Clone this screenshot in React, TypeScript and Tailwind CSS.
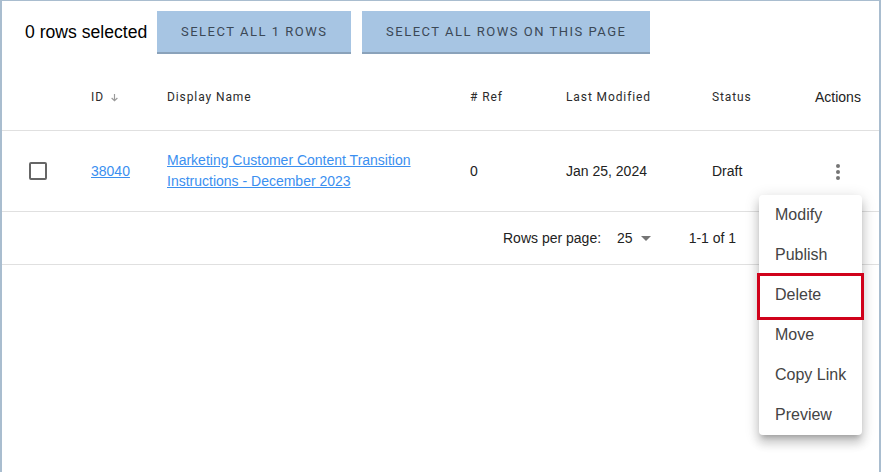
import React from "react";

const sans = { fontFamily: '"Liberation Sans", Arial, sans-serif' };

function Kebab() {
  return (
    <svg width="6" height="18" viewBox="0 0 6 18">
      <circle cx="3" cy="3" r="2" fill="#757575" />
      <circle cx="3" cy="9" r="2" fill="#757575" />
      <circle cx="3" cy="15" r="2" fill="#757575" />
    </svg>
  );
}

export default function App() {
  const items = ["Modify", "Publish", "Delete", "Move", "Copy Link", "Preview"];
  return (
    <div className="relative w-[881px] h-[472px] bg-white overflow-hidden" style={sans}>
      <div className="h-full border-l-2 border-t border-r-2 border-[#a9bdcf] flex flex-col">
        {/* toolbar */}
        <div className="h-[63px] flex items-start pt-[10px] pl-[23px]">
          <div className="h-[42px] flex items-center text-[17.6px] text-black mr-[10px]">0 rows selected</div>
          <button className="h-[43px] w-[194px] bg-[#a7c5e3] border-b-2 border-[#8aa2ba] text-[13px] tracking-[1.5px] text-[#3b4856] flex items-center justify-center" style={{ fontFamily: "Roboto, sans-serif" }}>
            SELECT ALL 1 ROWS
          </button>
          <button className="ml-[11px] h-[43px] w-[288px] bg-[#a7c5e3] border-b-2 border-[#8aa2ba] text-[13px] tracking-[1.5px] text-[#3b4856] flex items-center justify-center" style={{ fontFamily: "Roboto, sans-serif" }}>
            SELECT ALL ROWS ON THIS PAGE
          </button>
        </div>
        {/* header */}
        <div className="h-[67px] flex items-center border-b border-[#e0e0e0] text-[12px] tracking-[0.9px] text-[#2b2b2b]" style={{ fontFamily: "Roboto, sans-serif" }}>
          <div className="w-[89px]" />
          <div className="w-[76px] flex items-center gap-[6px]">
            <span>ID</span>
            <svg width="9" height="9" viewBox="0 0 10 10">
              <path d="M5 1 V8.5 M1.8 5.5 L5 8.5 L8.2 5.5" stroke="#9a9a9a" strokeWidth="1.3" fill="none" />
            </svg>
          </div>
          <div className="w-[303px]">Display Name</div>
          <div className="w-[96px]">{"# Ref"}</div>
          <div className="w-[146px]">Last Modified</div>
          <div className="w-[103px]">Status</div>
          <div className="text-[14px] tracking-normal text-[#222]" style={sans}>Actions</div>
        </div>
        {/* data row */}
        <div className="h-[81px] flex items-center border-b border-[#e0e0e0] text-[14px] text-[#222]">
          <div className="w-[89px] pl-[27px]">
            <div className="w-[18px] h-[18px] border-2 border-[#666] rounded-[2px]" />
          </div>
          <div className="w-[76px]">
            <a className="text-[#3b8ff0] underline">38040</a>
          </div>
          <div className="w-[303px] leading-[21px]">
            <a className="text-[#3b8ff0] underline">
              Marketing Customer Content Transition
              <br />
              Instructions - December 2023
            </a>
          </div>
          <div className="w-[96px]">0</div>
          <div className="w-[146px]">Jan 25, 2024</div>
          <div className="w-[123px]">Draft</div>
          <div className="pt-[1px]">
            <Kebab />
          </div>
        </div>
        {/* footer */}
        <div className="h-[53px] flex items-center border-b border-[#e0e0e0] text-[14px] text-[#222] pl-[501px]">
          <span>Rows per page:</span>
          <span className="ml-[16px]">25</span>
          <svg className="ml-[8px]" width="10" height="5" viewBox="0 0 10 5">
            <path d="M0 0 L10 0 L5 5 Z" fill="#757575" />
          </svg>
          <span className="ml-[38px]">1-1 of 1</span>
        </div>
      </div>
      {/* menu */}
      <div className="absolute left-[759px] top-[195px] w-[103px] bg-white rounded-[4px] shadow-[0_5px_5px_-3px_rgba(0,0,0,0.2),0_8px_10px_1px_rgba(0,0,0,0.14),0_3px_14px_2px_rgba(0,0,0,0.12)] flex flex-col">
        {items.map((it) => (
          <div key={it} className="h-[40px] flex items-center pl-[16px] text-[16px] text-[#444]">
            {it}
          </div>
        ))}
      </div>
      <div className="absolute left-[757px] top-[273px] w-[107px] h-[47px] border-[3px] border-[#d0021b]" />
    </div>
  );
}
